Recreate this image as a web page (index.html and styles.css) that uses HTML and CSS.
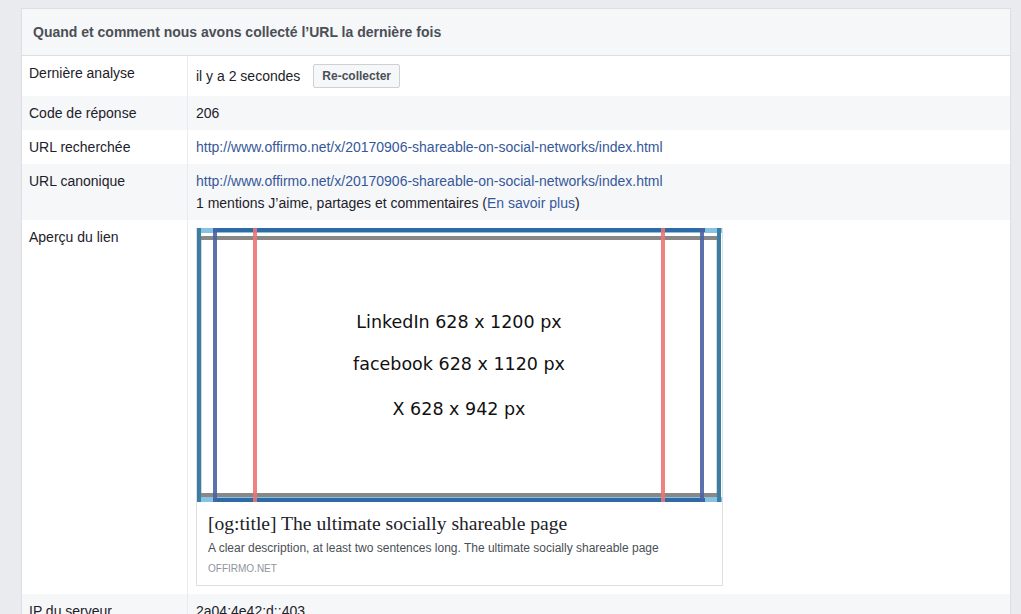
FILE: index.html
```html
<!DOCTYPE html>
<html lang="fr">
<head>
<meta charset="utf-8">
<title>Débogueur de partage</title>
<link rel="stylesheet" href="styles.css">
</head>
<body>
<div class="page">
  <section class="panel">
    <header class="panel-head">Quand et comment nous avons collecté l’URL la dernière fois</header>
    <div class="row">
      <div class="label">Dernière analyse</div>
      <div class="value value-inline">
        <span>il y a 2 secondes</span>
        <button class="btn" type="button">Re-collecter</button>
      </div>
    </div>
    <div class="row alt">
      <div class="label">Code de réponse</div>
      <div class="value">206</div>
    </div>
    <div class="row">
      <div class="label">URL recherchée</div>
      <div class="value"><a class="link" href="#">http://www.offirmo.net/x/20170906-shareable-on-social-networks/index.html</a></div>
    </div>
    <div class="row alt">
      <div class="label">URL canonique</div>
      <div class="value">
        <div><a class="link" href="#">http://www.offirmo.net/x/20170906-shareable-on-social-networks/index.html</a></div>
        <div class="sub">1 mentions J’aime, partages et commentaires (<a class="link" href="#">En savoir plus</a>)</div>
      </div>
    </div>
    <div class="row">
      <div class="label">Aperçu du lien</div>
      <div class="value">
        <div class="card">
          <svg class="card-img" width="525" height="274" viewBox="0 0 525 274" xmlns="http://www.w3.org/2000/svg">
            <rect x="0" y="0" width="525" height="274" fill="#ffffff"/>
            <rect x="0" y="0" width="525" height="5" fill="#86c2e2"/>
            <rect x="0" y="269" width="525" height="5" fill="#86c2e2"/>
            <rect x="16" y="0" width="492" height="4" fill="#2e6ba6"/>
            <rect x="16" y="270" width="492" height="4" fill="#2e6ba6"/>
            <rect x="3" y="8" width="518" height="4" fill="#606060" opacity="0.75"/>
            <rect x="3" y="265" width="518" height="4" fill="#606060" opacity="0.75"/>
            <rect x="0" y="0" width="4" height="274" fill="#3c7ea3"/>
            <rect x="520" y="0" width="4" height="274" fill="#3c7ea3"/>
            <rect x="4" y="12" width="1" height="253" fill="#d8d8d8"/>
            <rect x="519" y="12" width="1" height="253" fill="#d8d8d8"/>
            <rect x="16" y="0" width="4" height="274" fill="#4a63a3" opacity="0.9"/>
            <rect x="503" y="0" width="4" height="274" fill="#4a63a3" opacity="0.9"/>
            <rect x="56" y="0" width="4" height="274" fill="#ee7373" opacity="0.9"/>
            <rect x="464" y="0" width="4" height="274" fill="#ee7373" opacity="0.9"/>
            <g font-family="DejaVu Sans, sans-serif" font-size="17.5" fill="#111" text-anchor="middle">
              <text x="262" y="100">LinkedIn 628 x 1200 px</text>
              <text x="262" y="142">facebook 628 x 1120 px</text>
              <text x="262" y="187">X 628 x 942 px</text>
            </g>
          </svg>
          <div class="card-body">
            <div class="card-title">[og:title] The ultimate socially shareable page</div>
            <div class="card-desc">A clear description, at least two sentences long. The ultimate socially shareable page</div>
            <div class="card-domain">OFFIRMO.NET</div>
          </div>
        </div>
      </div>
    </div>
    <div class="row alt">
      <div class="label">IP du serveur</div>
      <div class="value">2a04:4e42:d::403</div>
    </div>
  </section>
</div>
</body>
</html>
```

FILE: styles.css
```css
html, body {
  margin: 0;
  padding: 0;
  background: #e9ebee;
  font-family: "Liberation Sans", Arial, Helvetica, sans-serif;
  font-size: 14px;
  color: #1d2129;
}

.page {
  padding: 8px 10px 0 21px;
}

.panel {
  background: #ffffff;
  border: 1px solid #dddfe2;
  border-bottom: none;
}

.panel-head {
  background: #f6f7f9;
  border-bottom: 1px solid #dddfe2;
  padding: 14px 11px;
  line-height: 18px;
  font-weight: bold;
  color: #4b4f56;
}

.row {
  display: grid;
  grid-template-columns: 166px 1fr;
  background: #ffffff;
}

.row.alt {
  background: #f6f7f9;
}

.label {
  padding: 8px 7px;
  line-height: 18px;
  border-right: 1px solid #e9ebee;
  color: #1d2129;
}

.value {
  padding: 8px 8px;
  line-height: 18px;
  color: #1d2129;
}

.value-inline {
  display: flex;
  align-items: center;
  gap: 13px;
  padding-top: 8px;
  padding-bottom: 8px;
}

.btn {
  height: 24px;
  padding: 0 8px;
  border: 1px solid #ced0d4;
  border-radius: 2px;
  background: #f6f7f9;
  color: #4b4f56;
  font-family: "Liberation Sans", Arial, Helvetica, sans-serif;
  font-size: 12px;
  font-weight: bold;
  line-height: 22px;
}

.link {
  color: #365899;
  text-decoration: none;
}

.sub {
  margin-top: 4px;
}

.card {
  width: 525px;
  border: 1px solid #dddfe2;
  border-top: none;
  background: #ffffff;
}

.card-img {
  display: block;
}

.card-body {
  padding: 11px 11px 8px;
}

.card-title {
  font-family: "Liberation Serif", Georgia, serif;
  font-size: 19.6px;
  line-height: 22px;
  color: #1d2129;
}

.card-desc {
  margin-top: 5px;
  font-size: 12px;
  line-height: 16px;
  color: #4b4f56;
}

.card-domain {
  margin-top: 5px;
  font-size: 10px;
  line-height: 16px;
  color: #90949c;
  text-transform: uppercase;
}
```
